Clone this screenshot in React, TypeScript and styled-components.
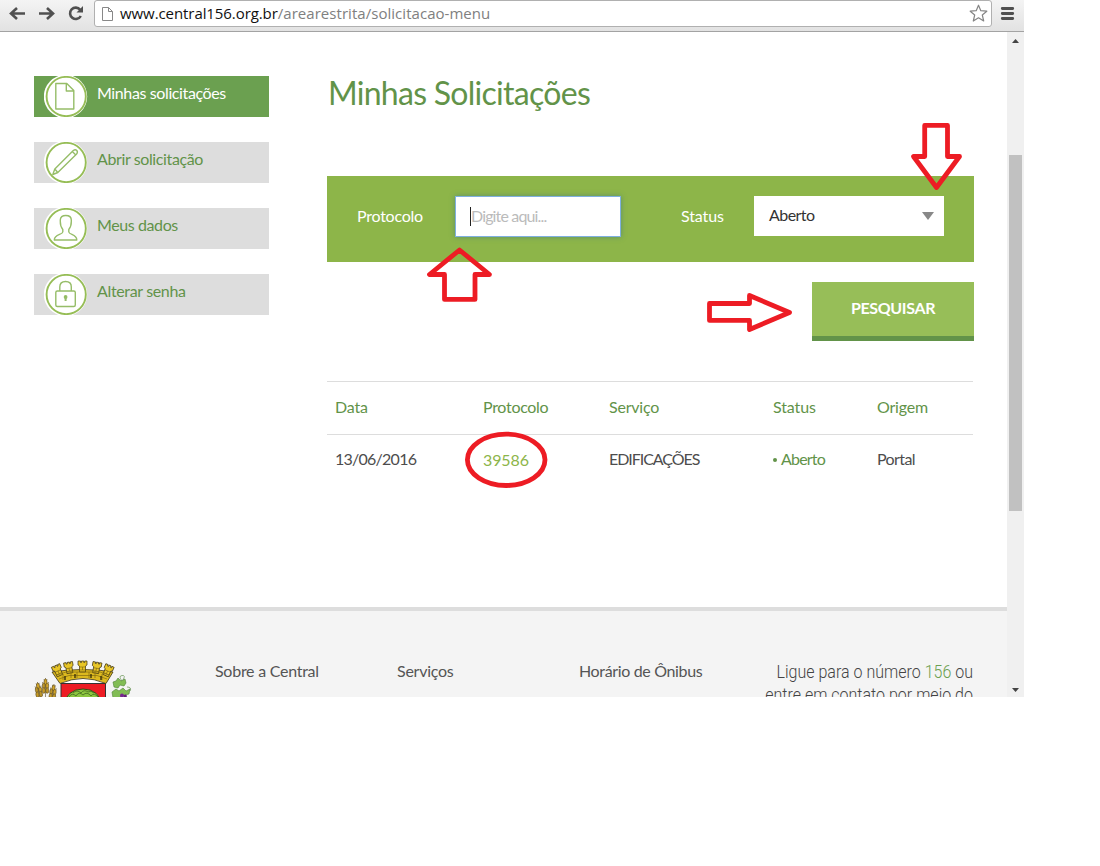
import React from "react";
import styled, { createGlobalStyle } from "styled-components";

const GlobalStyle = createGlobalStyle`
  * { box-sizing: border-box; }
  body { margin: 0; background: #fff; }
`;

const Window = styled.div`
  position: relative;
  width: 1024px;
  height: 697px;
  overflow: hidden;
  display: flex;
  flex-direction: column;
  font-family: Lato, "Liberation Sans", sans-serif;
  font-size: 16px;
  color: #555;
`;

const Toolbar = styled.header`
  flex: none;
  height: 32px;
  display: flex;
  align-items: flex-start;
  background: linear-gradient(#f4f4f4, #e2e2e2);
  border-bottom: 1px solid #a3a3a3;
`;

const NavIcons = styled.svg`
  display: block;
  flex: none;
`;

const AddressBar = styled.div`
  width: 898px;
  height: 27px;
  display: flex;
  align-items: center;
  padding: 0 3px 0 6px;
  background: #fff;
  border: 1px solid #b0b0b0;
  border-radius: 3px;
`;

const Url = styled.div`
  flex: 1;
  padding: 0 0 1px 6px;
  white-space: nowrap;
  font: 15px/20px "Open Sans", "Noto Sans", sans-serif;
  letter-spacing: -0.08px;
  color: #111;
`;

const UrlPath = styled.span`
  color: #808080;
  letter-spacing: 0.04px;
`;

const Viewport = styled.div`
  flex: 1;
  min-height: 0;
  display: flex;
`;

const Page = styled.div`
  width: 1007px;
  overflow: hidden;
`;

const Content = styled.div`
  display: flex;
  height: 575px;
  padding: 44px 33px 0 34px;
`;

const Sidebar = styled.nav`
  width: 235px;
  margin-right: 58px;
  display: flex;
  flex-direction: column;
  gap: 25px;
`;

const MenuItem = styled.a<{ $active?: boolean }>`
  display: flex;
  height: 41px;
  padding-left: 10px;
  background: ${(p) => (p.$active ? "#6ba050" : "#ddd")};
  color: ${(p) => (p.$active ? "#fff" : "#629349")};
`;

const MenuIcon = styled.svg`
  display: block;
  flex: none;
  width: 44px;
  height: 41px;
  margin-right: 9px;
`;

const Text = styled.span<{ $ls?: number; $bold?: boolean }>`
  white-space: nowrap;
  letter-spacing: ${(p) => p.$ls ?? 0}px;
  font-weight: ${(p) => (p.$bold ? 700 : 400)};
`;

const MenuLabel = styled(Text)`
  line-height: 34px;
`;

const Main = styled.main`
  width: 647px;
`;

const Title = styled.h1`
  margin: 0;
  padding-left: 1px;
  height: 100px;
  font-size: 32px;
  line-height: 34px;
  font-weight: 400;
  letter-spacing: -0.72px;
  white-space: nowrap;
  color: #629349;
`;

const FilterPanel = styled.form`
  display: flex;
  align-items: flex-start;
  height: 86px;
  padding: 20px 30px 0;
  background: #8db549;
  color: #fff;
`;

const FilterLabel = styled.label<{ $width: number }>`
  width: ${(p) => p.$width}px;
  line-height: 39px;
  white-space: nowrap;
`;

const ProtocolField = styled.div`
  display: flex;
  align-items: center;
  width: 166px;
  height: 41px;
  margin: 0 60px 0 0;
  padding: 0 0 1px 14px;
  background: #fff;
  border: 1px solid #7fb0e0;
  box-shadow: 0 0 5px rgba(60, 120, 130, 0.6);
  color: #bbb;
`;

const Placeholder = styled.span`
  padding-bottom: 2px;
  white-space: nowrap;
  letter-spacing: -0.85px;
`;

const Caret = styled.span`
  width: 1px;
  height: 19px;
  background: #222;
`;

const StatusSelect = styled.div`
  display: flex;
  align-items: center;
  justify-content: space-between;
  width: 190px;
  height: 40px;
  padding: 0 10px 0 15px;
  line-height: 18px;
  background: #fff;
  color: #333;
`;

const SelectValue = styled.span`
  padding-bottom: 3px;
  letter-spacing: -0.55px;
`;

const SearchButton = styled.button`
  display: block;
  width: 162px;
  height: 59px;
  margin: 20px 0 40px auto;
  padding: 0 0 2px;
  border: 0;
  border-bottom: 5px solid #629349;
  background: #97be58;
  color: #fff;
  font: 700 16px/20px Lato, sans-serif;
`;

const Row = styled.div<{ $head?: boolean }>`
  display: grid;
  grid-template-columns: 148px 126px 164px 104px 1fr;
  width: 646px;
  height: 53px;
  padding-left: 8px;
  border-top: 1px solid #ddd;
  line-height: ${(p) => (p.$head ? 50 : 48)}px;
  color: ${(p) => (p.$head ? "#629349" : "#4d4d4d")};
`;

const Tone = styled(Text)<{ $color: string; $drop?: number }>`
  color: ${(p) => p.$color};
  padding-top: ${(p) => p.$drop ?? 0}px;
`;

const Bullet = styled.span`
  display: inline-block;
  width: 4px;
  height: 4px;
  margin-right: 4px;
  border-radius: 2px;
  background: currentColor;
  vertical-align: 3px;
`;

const Footer = styled.footer`
  display: flex;
  height: 90px;
  border-top: 4px solid #ddd;
  background: #f4f4f4;
  padding: 49px 34px 0 34px;
  line-height: 22px;
`;

const Crest = styled.svg`
  display: block;
  flex: none;
  margin-right: 81px;
`;

const FooterLink = styled.div<{ $width: number }>`
  width: ${(p) => p.$width}px;
  white-space: nowrap;
`;

const Call = styled.p`
  flex: 1;
  margin: 0;
  text-align: right;
  white-space: nowrap;
  font: 300 18px/23px Roboto, sans-serif;
  color: #444;
  transform: scaleX(0.89);
  transform-origin: right top;
`;

const CallNumber = styled.span`
  color: #6ba050;
`;

const Scrollbar = styled.div`
  display: flex;
  flex-direction: column;
  align-items: center;
  justify-content: space-between;
  width: 17px;
  padding: 7px 0 5px;
  background: #f0f0f0;
`;

const Thumb = styled.div`
  width: 13px;
  height: 356px;
  margin-bottom: 66px;
  background: #c1c1c1;
`;

const Marks = styled.svg`
  position: absolute;
  left: 0;
  top: 0;
  pointer-events: none;
`;

const glyphs: Record<string, React.ReactNode> = {
  page: <path d="M12.5 7.5H23.5L30.5 14.5V33H12.5ZM23 7.5V15H30.5" />,
  pencil: <path d="M9.5 32.5L11.5 27L30 8.5Q32 7 33.5 8.5Q34.8 10 33.3 12L14.5 30.5ZM11.5 27L14.5 30.5M29 9.5L32.5 13" />,
  person: (
    <path d="M19.5 21.5C16.5 18 17 15 17 12C17 9 19 7.5 22.5 7.5S28 9 28 12C28 15 28.5 18 25.5 21.5V24C26 27 33.5 26 33.5 32H11C11 26 19 27 19.5 24Z" />
  ),
  lock: (
    <>
      <rect x="12.5" y="17" width="19.5" height="15.5" rx="1.5" />
      <path d="M16.5 17V13Q16.5 7.5 22.3 7.5T28 13V17" />
      <circle cx="22.3" cy="23" r="1.2" fill="#8db549" />
      <path d="M22.3 23V27" strokeWidth="2" />
    </>
  ),
};

const menu = [
  { icon: "page", label: "Minhas solicitações", ls: -0.38, active: true },
  { icon: "pencil", label: "Abrir solicitação", ls: -0.38 },
  { icon: "person", label: "Meus dados", ls: -0.4 },
  { icon: "lock", label: "Alterar senha", ls: -0.35 },
];

function CrestDrawing() {
  const towers: [number, number, number][] = [
    [21.5, 5.5, -24],
    [34, 2.3, -10],
    [48.5, 1, 0],
    [63.5, 2.3, 10],
    [76, 5.5, 24],
  ];
  return (
    <Crest width="100" height="37" viewBox="0 0 100 37">
      <path d="M27 24V16Q49 10 72 16V24Z" fill="#fff" />
      <path d="M27 23.5H71.5V50H27Z" fill="#ed1c24" stroke="#333" strokeWidth="1" />
      <path d="M29 46Q33 29 49 29T69 46Z" fill="#8cc63f" stroke="#334d18" strokeWidth="1" />
      <path d="M35 37Q38 32 42 36Q45 31 49 35Q53 31 57 36Q60 32 64 37M39 33Q43 29 47 33Q50 29 54 32Q57 30 60 33" fill="none" stroke="#446a20" strokeWidth="0.8" />
      <path d="M18 12Q33 9.5 49 9.5T79 12L72 23.5Q60 18.5 49 18.5T26 23.5Z" fill="#dcb91f" stroke="#3c3210" strokeWidth="0.8" />
      {towers.map(([x, y, r]) => (
        <g key={x} transform={`translate(${x} ${y}) rotate(${r})`}>
          <path d="M-4.5 0H-2V1.5H-1V0H1.3V1.5H2.2V0H4.5V4L3 5V11H-3V5L-4.5 4Z" fill="#e8c526" stroke="#3c3210" strokeWidth="0.7" />
          <path d="M-3 6H3M-3 9H3M0 6V9" stroke="#75600f" strokeWidth="0.6" />
        </g>
      ))}
      <path d="M23 15L32 12L66 12L75 15M25 19L35 15.5H63L73 19M29 14V20M37 11V18M43 12V18M55 12V18M61 11V18M68 14V20" fill="none" stroke="#826b12" strokeWidth="0.7" />
      <path d="M31 16v4M41 14v4M57 14v4M67 16v4" stroke="#332a0a" strokeWidth="1.3" />
      {[[4, 26, -8], [11.5, 22, 0], [19.5, 28, 8]].map(([x, y, r]) => (
        <g key={x} transform={`translate(${x} ${y}) rotate(${r})`} stroke="#5e4c20" strokeWidth="0.6">
          <path d="M0 -4V20M-1.5 -3L0 2L1.5 -3M-3 0L-2 4M3 0L2 4" fill="none" />
          <ellipse cx="0" cy="0" rx="1.5" ry="2.9" fill="#d2a528" />
          <ellipse cx="-1.7" cy="4" rx="1.5" ry="2.9" fill="#bd9528" />
          <ellipse cx="1.7" cy="4" rx="1.5" ry="2.9" fill="#d2a528" />
          <ellipse cx="-1.7" cy="8.5" rx="1.6" ry="2.8" fill="#c49927" />
          <ellipse cx="1.7" cy="8.5" rx="1.6" ry="2.8" fill="#bd9528" />
        </g>
      ))}
      <g stroke="#4f8238" strokeWidth="0.6" fill="#82bd55">
        <path d="M79 22L82 21L84 18L87 21L91 19L92 23L90 26L86 25L84 28L80 27Z" />
        <path d="M78 32L82 29L85 31L89 28L92 31L96 29L95 34L91 35L86 38L79 38Z" />
        <path d="M88 21Q84 16 88 15.5T89 20M93 27Q98 27 96 31" fill="none" />
      </g>
      <circle cx="88" cy="35.5" r="2" fill="#782490" />
      <circle cx="91.3" cy="36" r="1.6" fill="#612078" />
    </Crest>
  );
}

export default function App() {
  return (
    <>
      <GlobalStyle />
      <Window>
        <Toolbar>
          <NavIcons width="94" height="28" viewBox="0 0 94 28" fill="none" stroke="#505050" strokeWidth="2.6">
            <path d="M25 13.5H11.5M17 8L11 13.5L17 19" />
            <path d="M39 13.5H52.5M47 8L53 13.5L47 19" />
            <path d="M80.2 9.7A5.7 5.7 0 1 0 80.8 16" />
            <path d="M83 6V12.5H76.5Z" fill="#505050" stroke="none" />
          </NavIcons>
          <AddressBar>
            <svg width="13" height="16" viewBox="0 0 13 16" fill="none" stroke="#888">
              <path d="M1.5 1.5H7.5L11.5 5.5V14.5H1.5ZM7.5 1.5V5.5H11.5" />
            </svg>
            <Url>
              www.central156.org.br<UrlPath>/arearestrita/solicitacao-menu</UrlPath>
            </Url>
            <svg width="19" height="19" viewBox="0 0 19 19" fill="#fff" stroke="#858585" strokeWidth="1.2" strokeLinejoin="round">
              <path d="M9.5 1.2L11.8 6.7L17.8 7.2L13.3 11L14.7 17L9.5 13.8L4.3 17L5.7 11L1.2 7.2L7.2 6.7Z" />
            </svg>
          </AddressBar>
          <NavIcons width="32" height="28" viewBox="0 0 32 28" stroke="#505050" strokeWidth="2.9" strokeLinecap="round">
            <path d="M10.3 8.5H20.7M10.3 13.5H20.7M10.3 18.5H20.7" />
          </NavIcons>
        </Toolbar>
        <Viewport>
          <Page>
            <Content>
              <Sidebar>
                {menu.map((m) => (
                  <MenuItem key={m.label} $active={m.active}>
                    <MenuIcon viewBox="0 0 44 41">
                      <circle cx="21.5" cy="20.5" r="21.7" fill="#fff" />
                      <circle cx="22.2" cy="20.5" r="19.6" fill="#fff" stroke="#96bd56" strokeWidth="1.9" />
                      <g
                        fill="none"
                        stroke="#96bd68"
                        strokeWidth="1.4"
                        strokeLinejoin="round"
                        transform="translate(-0.7 0)"
                      >
                        {glyphs[m.icon]}
                      </g>
                    </MenuIcon>
                    <MenuLabel $ls={m.ls}>{m.label}</MenuLabel>
                  </MenuItem>
                ))}
              </Sidebar>
              <Main>
                <Title>Minhas Solicitações</Title>
                <FilterPanel>
                  <FilterLabel $width={98}>
                    <Text $ls={-0.25}>Protocolo</Text>
                  </FilterLabel>
                  <ProtocolField>
                    <Caret />
                    <Placeholder>Digite aqui...</Placeholder>
                  </ProtocolField>
                  <FilterLabel $width={73}>
                    <Text $ls={-0.1}>Status</Text>
                  </FilterLabel>
                  <StatusSelect>
                    <SelectValue>Aberto</SelectValue>
                    <svg width="12" height="8" viewBox="0 0 12 8">
                      <path d="M0 0H12L6 8Z" fill="#888" />
                    </svg>
                  </StatusSelect>
                </FilterPanel>
                <SearchButton type="button">
                  <Text $bold $ls={-0.35}>PESQUISAR</Text>
                </SearchButton>
                <Row $head>
                  <Text $ls={-0.2}>Data</Text>
                  <Text $ls={-0.3}>Protocolo</Text>
                  <Text $ls={-0.2}>Serviço</Text>
                  <Text $ls={-0.1}>Status</Text>
                  <Text $ls={-0.2}>Origem</Text>
                </Row>
                <Row>
                  <Text $ls={-0.75}>13/06/2016</Text>
                  <Tone $color="#8db549" $drop={1} $ls={-0.1}>39586</Tone>
                  <Text $ls={-1.05}>EDIFICAÇÕES</Text>
                  <Tone $color="#629349" $ls={-0.8}>
                    <Bullet />
                    Aberto
                  </Tone>
                  <Text $ls={-0.6}>Portal</Text>
                </Row>
              </Main>
            </Content>
            <Footer>
              <CrestDrawing />
              <FooterLink $width={182}>
                <Text $ls={-0.26}>Sobre a Central</Text>
              </FooterLink>
              <FooterLink $width={182}>
                <Text $ls={-0.25}>Serviços</Text>
              </FooterLink>
              <FooterLink $width={140}>
                <Text $ls={-0.35}>Horário de Ônibus</Text>
              </FooterLink>
              <Call>
                Ligue para o número <CallNumber>156</CallNumber> ou
                <br />
                entre em contato por meio do
              </Call>
            </Footer>
          </Page>
          <Scrollbar>
            <svg width="7" height="4" viewBox="0 0 7 4">
              <path d="M0 4L3.5 0L7 4Z" fill="#444" />
            </svg>
            <Thumb />
            <svg width="7" height="4" viewBox="0 0 7 4">
              <path d="M0 0L3.5 4L7 0Z" fill="#444" />
            </svg>
          </Scrollbar>
        </Viewport>
        <Marks width="1024" height="697" fill="none" stroke="#ed1c24" strokeWidth="4.8" strokeLinejoin="round">
          <path d="M459.5 250L429.5 274.5H444.5V299.4H475V274.5H489.5Z" />
          <path d="M924.7 125.4H947.5V156.5H959.5L936.5 187.5L913.5 156.5H924.7Z" />
          <path d="M709.5 303.5H749.5V295.5L789.5 312.5L749.5 329.5V320.4H709.5Z" />
          <ellipse cx="506.2" cy="459.8" rx="38.8" ry="25.7" />
        </Marks>
      </Window>
    </>
  );
}
